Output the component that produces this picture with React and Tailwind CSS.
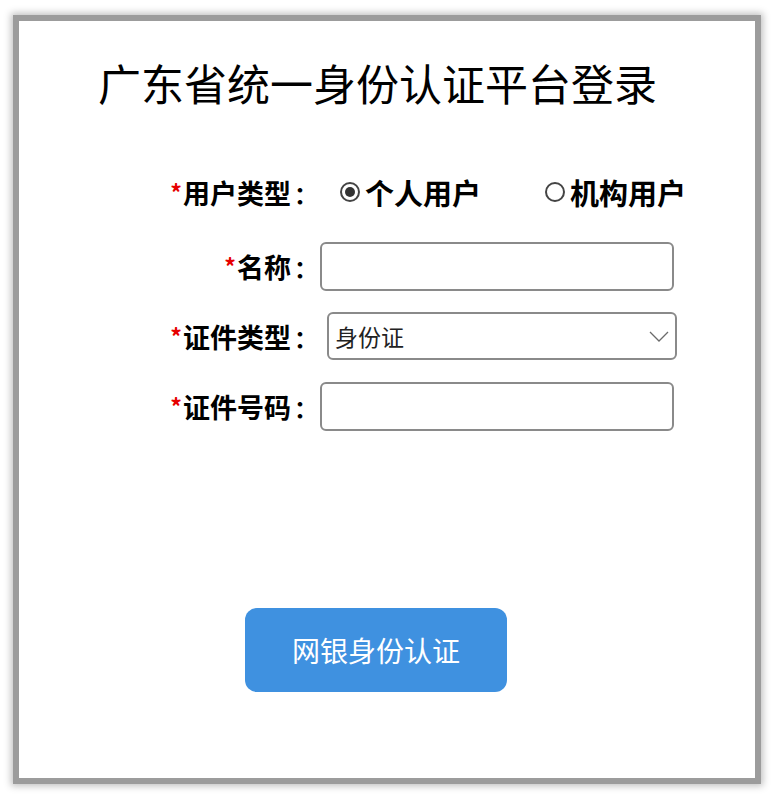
const FONT = { fontFamily: '"Noto Sans CJK SC", "Noto Sans", sans-serif' }

function Label({ text }) {
  return (
    <div className="flex w-[285px] shrink-0 items-baseline justify-end font-bold leading-none text-black">
      <span className="relative -top-[2px] mr-[1px] text-[23px] text-[#e60000]">*</span>
      <span className="text-[27px]">{text}</span>
      <span className="ml-[3px] inline-block w-[10px] overflow-visible whitespace-nowrap text-[24px]">：</span>
    </div>
  )
}

function Radio({ checked, label }) {
  return (
    <div className="flex items-center">
      <span className="flex h-[20px] w-[20px] items-center justify-center rounded-full border-2 border-[#444]">
        {checked ? <span className="h-[10px] w-[10px] rounded-full bg-[#333]" /> : null}
      </span>
      <span className="ml-[5px] text-[29px] font-bold leading-none text-black">{label}</span>
    </div>
  )
}

export default function App() {
  return (
    <div className="h-[799px] w-[776px] bg-white pl-[13px] pt-[15px]" style={FONT}>
      <div className="h-[769px] w-[748px] border-[6px] border-[#9c9c9c] bg-white shadow-[0_0_7px_2px_rgba(0,0,0,0.25)]">
        <h1 className="ml-[79px] mt-[36px] text-[43px] font-normal leading-[50px] text-black">
          广东省统一身份认证平台登录
        </h1>

        <div className="mt-[60px]">
          <div className="flex h-[50px] items-center">
            <Label text="用户类型" />
            <div className="ml-[36px] flex items-center">
              <Radio checked label="个人用户" />
              <div className="ml-[64px]">
                <Radio label="机构用户" />
              </div>
            </div>
          </div>

          <div className="mt-[25px] flex h-[49px] items-center">
            <Label text="名称" />
            <input
              type="text"
              className="ml-[16px] h-[49px] w-[354px] rounded-[6px] border-2 border-[#8a8a8a] bg-white px-2 text-[20px] outline-none"
            />
          </div>

          <div className="mt-[21px] flex h-[48px] items-center">
            <Label text="证件类型" />
            <div className="relative ml-[23px] h-[48px] w-[350px] rounded-[6px] border-2 border-[#8a8a8a] bg-white">
              <div className="flex h-full items-center pl-[6px] text-[23px] leading-none text-[#222]">身份证</div>
              <svg
                className="absolute right-[6px] top-[15px]"
                width="20"
                height="14"
                viewBox="0 0 20 14"
                fill="none"
              >
                <polyline points="1,3 10,12 19,3" stroke="#6b6b6b" strokeWidth="1.3" />
              </svg>
            </div>
          </div>

          <div className="mt-[22px] flex h-[49px] items-center">
            <Label text="证件号码" />
            <input
              type="text"
              className="ml-[16px] h-[49px] w-[354px] rounded-[6px] border-2 border-[#8a8a8a] bg-white px-2 text-[20px] outline-none"
            />
          </div>
        </div>

        <button
          type="button"
          className="ml-[226px] mt-[177px] flex h-[84px] w-[262px] items-center justify-center rounded-[12px] bg-[#3f91e0] text-[28px] leading-none text-white"
        >
          网银身份认证
        </button>
      </div>
    </div>
  )
}
